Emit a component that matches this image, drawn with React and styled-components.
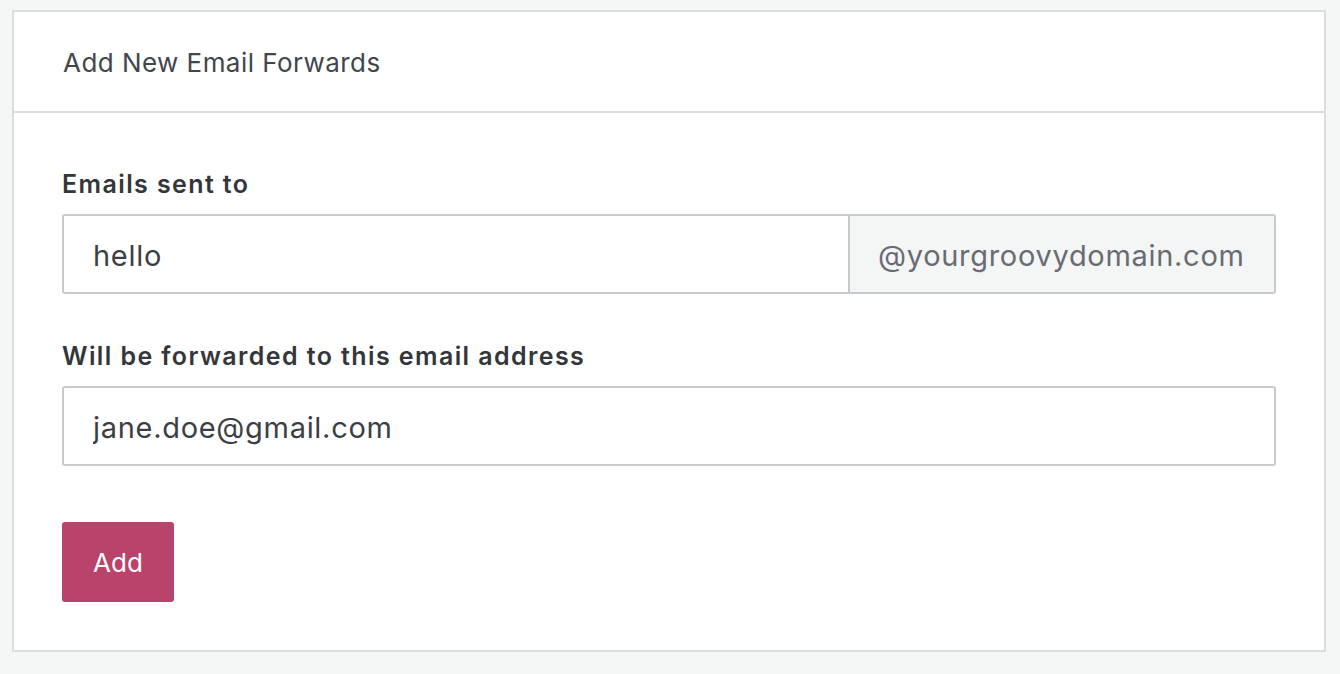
import React from 'react';
import styled, { createGlobalStyle } from 'styled-components';

const GlobalStyle = createGlobalStyle`
  html, body {
    margin: 0;
    padding: 0;
    background: #f5f6f6;
    font-family: Inter, "Liberation Sans", sans-serif;
    color: #3b3f45;
  }
  * { box-sizing: border-box; }
`;

const Page = styled.div`
  padding: 10px 14px 0 12px;
`;

const Card = styled.section`
  background: #fff;
  border: 2px solid #dcdddd;
`;

const CardHeader = styled.header`
  height: 101px;
  display: flex;
  align-items: center;
  padding: 2px 48px 0 49px;
  border-bottom: 2px solid #dcdddd;
  font-size: 26px;
  color: #41464d;
  letter-spacing: 0.45px;
`;

const CardBody = styled.div`
  padding: 53px 48px 48px 48px;
`;

const Field = styled.div`
  margin-bottom: ${(p) => p.gap || 0}px;
`;

const Label = styled.label`
  display: block;
  font-size: 25px;
  line-height: 36px;
  font-weight: 600;
  letter-spacing: 1.4px;
  color: #33363b;
  margin-bottom: 12px;
`;

const InputGroup = styled.div`
  display: flex;
  height: 80px;
  border: 2px solid #c8c9cc;
  border-radius: 3px;
  overflow: hidden;
`;

const Input = styled.input`
  flex: 1;
  min-width: 0;
  border: none;
  outline: none;
  padding: 2px 29px 0;
  font-family: inherit;
  font-size: 29px;
  letter-spacing: 0.7px;
  color: #3b3f45;
  background: #fff;
`;

const Addon = styled.span`
  display: flex;
  align-items: center;
  padding: 2px 28px 0;
  width: 426px;
  border-left: 2px solid #c8c9cc;
  background: #f4f5f5;
  font-size: 29px;
  letter-spacing: 0.7px;
  color: #686c72;
`;

const Button = styled.button`
  height: 80px;
  width: 112px;
  border: none;
  border-radius: 3px;
  background: #b9436a;
  color: #fff;
  font-family: inherit;
  font-size: 26px;
  padding-top: 2px;
  cursor: pointer;
`;

export default function App() {
  return (
    <>
      <GlobalStyle />
      <Page>
        <Card>
          <CardHeader>Add New Email Forwards</CardHeader>
          <CardBody>
            <Field gap={44}>
              <Label>Emails sent to</Label>
              <InputGroup>
                <Input defaultValue="hello" />
                <Addon>@yourgroovydomain.com</Addon>
              </InputGroup>
            </Field>
            <Field gap={56}>
              <Label>Will be forwarded to this email address</Label>
              <InputGroup>
                <Input defaultValue="jane.doe@gmail.com" />
              </InputGroup>
            </Field>
            <Button>Add</Button>
          </CardBody>
        </Card>
      </Page>
    </>
  );
}
